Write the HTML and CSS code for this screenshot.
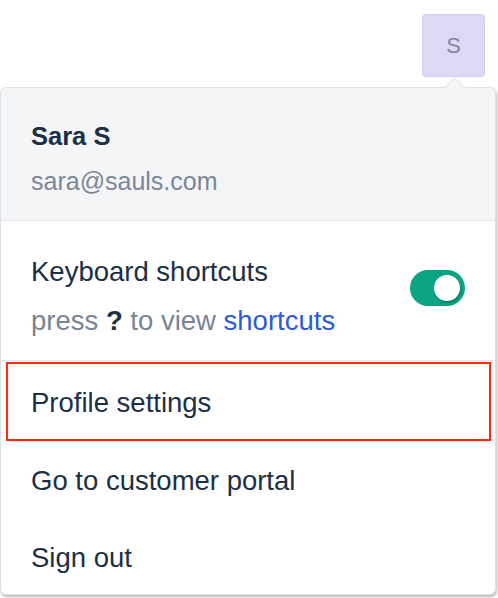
FILE: index.html
```html
<!DOCTYPE html>
<html>
<head>
<meta charset="utf-8">
<link rel="stylesheet" href="styles.css">
</head>
<body>
<div class="topbar">
  <div class="avatar">S</div>
</div>
<div class="menu">
  <span class="caret"></span>
  <div class="header">
    <div class="name">Sara S</div>
    <div class="email">sara@sauls.com</div>
  </div>
  <div class="shortcuts">
    <div class="shortcuts-text">
      <div class="item-label">Keyboard shortcuts</div>
      <div class="hint">press <b>?</b> to view <a class="link">shortcuts</a></div>
    </div>
    <div class="toggle"><span class="knob"></span></div>
  </div>
  <div class="item highlighted">Profile settings<span class="highlight"></span></div>
  <div class="item">Go to customer portal</div>
  <div class="item">Sign out</div>
</div>
</body>
</html>
```

FILE: styles.css
```css
html, body {
  margin: 0;
  padding: 0;
  background: #ffffff;
}
body {
  width: 498px;
  height: 598px;
  overflow: hidden;
  font-family: "Liberation Sans", Arial, sans-serif;
  color: #1b2f45;
}
.topbar {
  height: 87px;
  display: flex;
  justify-content: flex-end;
  align-items: flex-start;
  padding-right: 13px;
  box-sizing: border-box;
  padding-top: 14px;
}
.avatar {
  width: 63px;
  height: 63px;
  box-sizing: border-box;
  background: #ddd8f6;
  border: 1px solid #d3cdf0;
  border-radius: 4px;
  display: flex;
  align-items: center;
  justify-content: center;
  font-size: 22px;
  color: #878497;
}
.menu {
  position: relative;
  width: 496px;
  box-sizing: border-box;
  border: 1px solid #dde0e4;
  border-radius: 6px;
  background: #ffffff;
  box-shadow: 1px 2px 3px rgba(0, 0, 0, 0.28);
}
.caret {
  position: absolute;
  top: -8px;
  left: 446px;
  width: 14px;
  height: 14px;
  background: #f4f5f7;
  border-top: 1px solid #e1e4e8;
  border-left: 1px solid #e1e4e8;
  transform: rotate(45deg);
}
.header {
  position: relative;
  background: #f4f5f7;
  border-bottom: 1px solid #e3e6ea;
  border-radius: 6px 6px 0 0;
  padding: 32px 30px 0 30px;
  height: 133px;
  box-sizing: border-box;
}
.name {
  font-size: 25.5px;
  font-weight: bold;
  line-height: 32px;
}
.email {
  font-size: 25px;
  line-height: 32px;
  margin-top: 13px;
  color: #7a8797;
}
.shortcuts {
  display: flex;
  align-items: center;
  justify-content: space-between;
  padding: 26px 30px 15px 30px;
  border-bottom: 1px solid #e6e8ec;
}
.item-label {
  font-size: 27.5px;
  line-height: 49px;
}
.hint {
  font-size: 27.5px;
  line-height: 49px;
  color: #778594;
}
.hint b {
  color: #1b2f45;
}
.link {
  color: #2d5bd3;
}
.toggle {
  width: 55px;
  height: 36px;
  border-radius: 18px;
  background: #0ba584;
  display: flex;
  align-items: center;
  justify-content: flex-end;
  padding-right: 5px;
  box-sizing: border-box;
  margin-top: -16px;
}
.knob {
  width: 26px;
  height: 26px;
  border-radius: 50%;
  background: #ffffff;
  box-shadow: 1px 2px 2px rgba(0, 0, 0, 0.25);
}
.item {
  position: relative;
  font-size: 27.5px;
  line-height: 36px;
  padding: 24px 30px 17.5px 30px;
}
.highlight {
  position: absolute;
  top: 1px;
  left: 5px;
  right: 4px;
  bottom: -2.5px;
  border: 2px solid #ff2b06;
  pointer-events: none;
}
```
